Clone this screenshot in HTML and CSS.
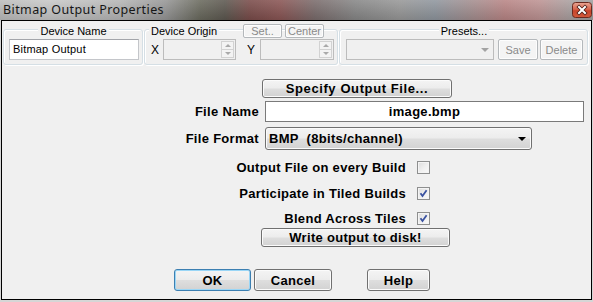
FILE: index.html
```html
<!DOCTYPE html>
<html>
<head>
<meta charset="utf-8">
<title>Bitmap Output Properties</title>
<link rel="stylesheet" href="styles.css">
</head>
<body>
<div class="screen">
  <div class="titlebar">
    <span class="title">Bitmap Output Properties</span>
    <span class="close">
      <svg width="20" height="16" viewBox="0 0 20 16">
        <defs>
          <linearGradient id="cg" x1="0" y1="0" x2="0" y2="1">
            <stop offset="0" stop-color="#e9a896"/>
            <stop offset="0.45" stop-color="#d8644c"/>
            <stop offset="0.55" stop-color="#c8452c"/>
            <stop offset="1" stop-color="#d25a3c"/>
          </linearGradient>
        </defs>
        <rect x="0.5" y="0.5" width="19" height="15" rx="3" fill="url(#cg)" stroke="#6b2a1f"/>
        <path d="M7 5 L13 11 M13 5 L7 11" stroke="#4a1a12" stroke-width="3.6" stroke-linecap="square"/>
        <path d="M7 5 L13 11 M13 5 L7 11" stroke="#ffffff" stroke-width="2" stroke-linecap="square"/>
      </svg>
    </span>
  </div>
  <div class="window">
    <div class="groups">
      <div class="group g-name">
        <div class="ghead centered"><span class="gtitle">Device Name</span></div>
        <div class="grow"><div class="textbox">Bitmap Output</div></div>
      </div>
      <div class="group g-origin">
        <div class="ghead">
          <span class="gtitle">Device Origin</span>
          <span class="dbtn set">Set..</span>
          <span class="dbtn ctr">Center</span>
        </div>
        <div class="grow">
          <span class="axis ax-x">X</span>
          <div class="spin sp-x">
            <div class="spinbtns">
              <span class="sb up"><span class="tri-up"></span></span>
              <span class="sb down"><span class="tri-down"></span></span>
            </div>
          </div>
          <span class="axis ax-y">Y</span>
          <div class="spin sp-y">
            <div class="spinbtns">
              <span class="sb up"><span class="tri-up"></span></span>
              <span class="sb down"><span class="tri-down"></span></span>
            </div>
          </div>
        </div>
      </div>
      <div class="group g-presets">
        <div class="ghead centered"><span class="gtitle">Presets...</span></div>
        <div class="grow">
          <div class="dcombo"><span class="tri-down grey"></span></div>
          <span class="dbtn big save">Save</span>
          <span class="dbtn big del">Delete</span>
        </div>
      </div>
    </div>

    <div class="main">
      <div class="row r-spec"><span class="btn spec">Specify Output File...</span></div>
      <div class="row r-fname">
        <span class="lbl">File Name</span>
        <div class="input">image.bmp</div>
      </div>
      <div class="row r-fmt">
        <span class="lbl">File Format</span>
        <div class="combo"><span class="ctext">BMP&nbsp;&nbsp;(8bits/channel)</span><span class="tri-down dark"></span></div>
      </div>
      <div class="row chk r-c1">
        <span class="clbl">Output File on every Build</span>
        <span class="cbox"></span>
      </div>
      <div class="row chk r-c2">
        <span class="clbl">Participate in Tiled Builds</span>
        <span class="cbox checked"><svg width="11" height="11" viewBox="0 0 11 11"><path d="M2.5 5.2 L4.5 8 L8.6 2.2" fill="none" stroke="#3a52a0" stroke-width="1.8"/></svg></span>
      </div>
      <div class="row chk r-c3">
        <span class="clbl">Blend Across Tiles</span>
        <span class="cbox checked"><svg width="11" height="11" viewBox="0 0 11 11"><path d="M2.5 5.2 L4.5 8 L8.6 2.2" fill="none" stroke="#3a52a0" stroke-width="1.8"/></svg></span>
      </div>
      <div class="row r-write"><span class="btn write">Write output to disk!</span></div>
      <div class="row r-bottom">
        <span class="btn ok">OK</span>
        <span class="btn cancel">Cancel</span>
        <span class="btn help">Help</span>
      </div>
    </div>
  </div>
</div>
</body>
</html>
```

FILE: styles.css
```css
* { box-sizing: border-box; }
html, body { margin: 0; padding: 0; }
body {
  width: 593px;
  height: 302px;
  overflow: hidden;
  background: #d6d6d6;
  font-family: "Liberation Sans", Arial, sans-serif;
  color: #000;
}
.screen { width: 593px; height: 302px; }

.titlebar {
  height: 20px;
  display: flex;
  align-items: center;
  justify-content: space-between;
  padding: 0 1px 0 3px;
  background:
    linear-gradient(to bottom, rgba(255,255,255,0.12), rgba(0,0,0,0.12)),
    linear-gradient(to right, #bdbdbd 0px, #c8c8c8 50px, #b6b6b6 120px, #979797 165px,
      #6a6a5e 200px, #5d5850 225px, #7a4c4a 250px, #8a5554 280px, #7a6c6c 315px,
      #878787 355px, #989898 400px, #8f969e 435px, #a38f90 470px, #b98585 505px,
      #bd9393 540px, #a9a1a1 572px, #a0a0a0 593px);
}
.title {
  font-family: "Noto Sans", "Open Sans", sans-serif;
  font-size: 12.5px;
  line-height: 16px;
  color: #161616;
  letter-spacing: 0.4px;
}
.close { display: block; width: 20px; height: 16px; }
.close svg { display: block; }

.window {
  margin-left: 1px;
  width: 591px;
  height: 280px;
  border: 1px solid #000;
  background: #f0f0f0;
  padding: 0 1px;
}

/* ---------- top group boxes ---------- */
.groups {
  display: flex;
  gap: 1px;
  margin-top: 8px;
  font-size: 11px;
}
.group {
  border: 1px solid #d5dfe5;
  border-radius: 3px;
  box-shadow: inset 1px 1px 0 #fff, 1px 1px 0 #fff;
  padding: 0 3px 4px 4px;
}
.g-name { width: 140px; }
.g-origin { width: 194px; }
.g-presets { width: 249px; }

.ghead {
  display: flex;
  align-items: center;
  height: 14px;
  margin-top: -6px;
}
.ghead.centered { justify-content: center; }
.gtitle {
  background: #f0f0f0;
  padding: 0 2px;
  line-height: 14px;
  color: #000;
}
.grow {
  display: flex;
  align-items: center;
  height: 21px;
  margin-top: 1px;
}

.textbox {
  width: 131px;
  height: 21px;
  margin-left: 1px;
  background: #fff;
  border: 1px solid #c4c6ca;
  border-top-color: #a3a5aa;
  padding-left: 3px;
  line-height: 19px;
  font-size: 11px;
  letter-spacing: 0.2px;
}

.dbtn {
  display: flex;
  align-items: center;
  justify-content: center;
  height: 14px;
  border: 1px solid #b4b8bb;
  border-radius: 2px;
  background: #f4f4f4;
  box-shadow: inset 0 0 0 1px #fdfdfd;
  color: #8a8a8a;
  font-size: 11px;
  line-height: 12px;
}
.set { width: 39px; margin-left: auto; }
.ctr { width: 39px; margin-left: 3px; margin-right: 10px; }
.dbtn.big { height: 21px; }
.save { width: 40px; margin-left: 4px; }
.del { width: 43px; margin-left: 2px; }

.axis { color: #000; font-size: 12px; line-height: 14px; }
.ax-x { margin-left: 2px; width: 12px; }
.ax-y { margin-left: 11px; width: 13px; }
.spin {
  height: 21px;
  border: 1px solid #bcbcbc;
  background: #f0f0f0;
  display: flex;
  justify-content: flex-end;
  padding: 1px;
}
.sp-x { width: 73px; }
.sp-y { width: 74px; }
.spinbtns { width: 13px; display: flex; flex-direction: column; }
.sb {
  flex: 1;
  border: 1px solid #d2d2d2;
  background: #f3f3f3;
  display: flex;
  align-items: center;
  justify-content: center;
}
.sb.down { border-top: none; }
.tri-up {
  width: 0; height: 0;
  border-left: 3px solid transparent;
  border-right: 3px solid transparent;
  border-bottom: 3px solid #a9a9a9;
}
.tri-down {
  display: block;
  width: 0; height: 0;
  border-left: 3px solid transparent;
  border-right: 3px solid transparent;
  border-top: 3px solid #a9a9a9;
}
.tri-down.grey { border-left-width: 4px; border-right-width: 4px; border-top: 4px solid #a3a3a3; }
.tri-down.dark { border-left-width: 4px; border-right-width: 4px; border-top: 4px solid #000; }

.dcombo {
  width: 148px;
  height: 21px;
  margin-left: 2px;
  border: 1px solid #bcbcbc;
  background: #f0f0f0;
  display: flex;
  align-items: center;
  justify-content: flex-end;
  padding-right: 4px;
}

/* ---------- main form ---------- */
.main {
  font-weight: bold;
  font-size: 13px;
  letter-spacing: 0.3px;
}
.row { display: flex; align-items: center; }

.btn {
  display: flex;
  align-items: center;
  justify-content: center;
  border: 1px solid #707070;
  border-radius: 3px;
  background: linear-gradient(to bottom, #f4f4f4 0%, #ececec 48%, #dedede 52%, #d2d2d2 100%);
  box-shadow: inset 0 0 0 1px #fbfbfb;
  color: #000;
}
.r-spec { margin-top: 14px; }
.spec { margin-left: 259px; width: 190px; height: 19px; letter-spacing: 0.6px; }

.lbl { width: 262px; text-align: right; padding-right: 6px; }
.r-fname { margin-top: 3px; }
.input {
  width: 319px;
  height: 21px;
  background: #fff;
  border: 1px solid #7a7a7a;
  text-align: center;
  line-height: 19px;
}
.r-fmt { margin-top: 5px; }
.combo {
  width: 267px;
  height: 23px;
  border: 1px solid #707070;
  border-radius: 3px;
  background: linear-gradient(to bottom, #f4f4f4 0%, #ececec 48%, #dedede 52%, #d2d2d2 100%);
  box-shadow: inset 0 0 0 1px #fbfbfb;
  display: flex;
  align-items: center;
  justify-content: space-between;
  padding: 0 5px 0 3px;
}

.chk { height: 13px; }
.r-c1 { margin-top: 11px; }
.r-c2 { margin-top: 13px; }
.r-c3 { margin-top: 12px; }
.clbl { width: 403px; text-align: right; line-height: 13px; }
.cbox {
  width: 13px;
  height: 13px;
  margin-left: 11px;
  border: 1px solid #8e8f8f;
  background: linear-gradient(135deg, #dcdcdc 0%, #f0f0f0 55%, #fafafa 100%);
  box-shadow: inset 0 0 0 1px #f4f4f4;
  display: flex;
  align-items: center;
  justify-content: center;
}
.cbox svg { display: block; }

.r-write { margin-top: 3px; }
.write { margin-left: 258px; width: 189px; height: 19px; }

.r-bottom { margin-top: 22px; }
.r-bottom .btn { height: 22px; }
.ok {
  margin-left: 171px;
  width: 77px;
  border-color: #3c7fb1;
  box-shadow: inset 0 0 0 1px #9ad6f6;
}
.cancel { margin-left: 3px; width: 78px; }
.help { margin-left: 35px; width: 63px; }
```
